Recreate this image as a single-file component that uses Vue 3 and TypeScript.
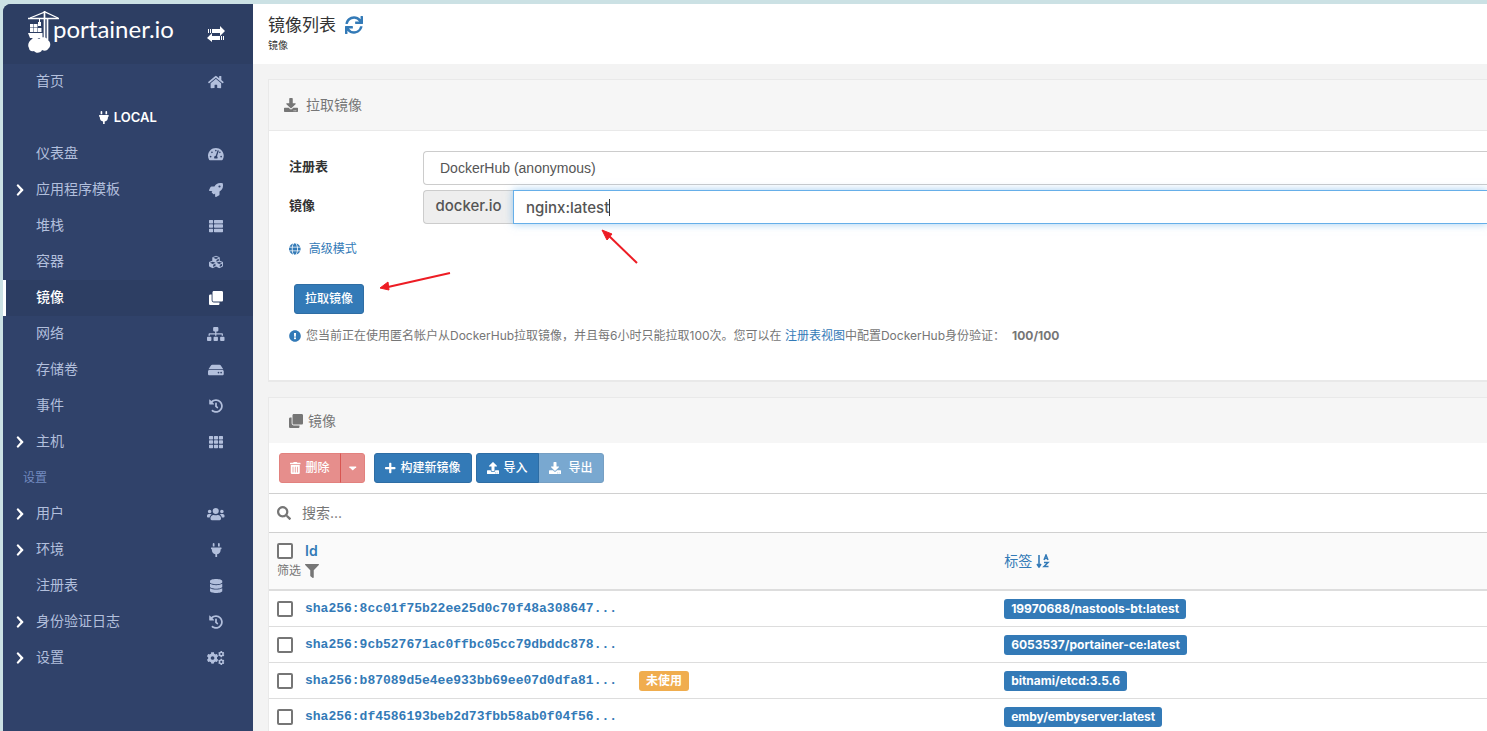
<script setup lang="ts">
import { h, ref } from 'vue'

type Glyph = { w: number; d: string }

const cog =
  'M487.4 315.7l-42.6-24.6c4.3-23.2 4.3-47 0-70.2l42.6-24.6c4.9-2.8 7.1-8.6 5.5-14-11.1-35.6-30-67.8-54.7-94.6-3.8-4.1-10-5.1-14.8-2.3L380.8 110c-17.9-15.4-38.5-27.3-60.8-35.1V25.8c0-5.6-3.9-10.5-9.4-11.7-36.7-8.2-74.3-7.8-109.2 0-5.5 1.2-9.4 6.1-9.4 11.7V75c-22.2 7.9-42.8 19.8-60.8 35.1L88.7 85.5c-4.9-2.8-11-1.9-14.8 2.3-24.7 26.7-43.6 58.9-54.7 94.6-1.7 5.4.6 11.2 5.5 14L67.3 221c-4.3 23.2-4.3 47 0 70.2l-42.6 24.6c-4.9 2.8-7.1 8.6-5.5 14 11.1 35.6 30 67.8 54.7 94.6 3.8 4.1 10 5.1 14.8 2.3l42.6-24.6c17.9 15.4 38.5 27.3 60.8 35.1v49.2c0 5.6 3.9 10.5 9.4 11.7 36.7 8.2 74.3 7.8 109.2 0 5.5-1.2 9.4-6.1 9.4-11.7v-49.2c22.2-7.9 42.8-19.8 60.8-35.1l42.6 24.6c4.9 2.8 11 1.9 14.8-2.3 24.7-26.7 43.6-58.9 54.7-94.6 1.5-5.5-.7-11.3-5.6-14.1zM256 336c-44.1 0-80-35.9-80-80s35.9-80 80-80 80 35.9 80 80-35.9 80-80 80z'

const glyphs: Record<string, Glyph> = {
  home: { w: 576, d: 'M280.37 148.26L96 300.11V464a16 16 0 0 0 16 16l112.06-.29a16 16 0 0 0 15.92-16V368a16 16 0 0 1 16-16h64a16 16 0 0 1 16 16v95.64a16 16 0 0 0 16 16.05L464 480a16 16 0 0 0 16-16V300L295.67 148.26a12.19 12.19 0 0 0-15.3 0zM571.6 251.47L488 182.56V44.05a12 12 0 0 0-12-12h-56a12 12 0 0 0-12 12v72.61L318.47 43a48 48 0 0 0-61 0L4.34 251.47a12 12 0 0 0-1.6 16.9l25.5 31A12 12 0 0 0 45.15 301l235.22-193.74a12.19 12.19 0 0 1 15.3 0L530.9 301a12 12 0 0 0 16.9-1.6l25.5-31a12 12 0 0 0-1.7-16.93z' },
  plug: { w: 384, d: 'M320 32a32 32 0 0 0-64 0v96h64zm48 128H16A16 16 0 0 0 0 176v32a16 16 0 0 0 16 16h16v32a160.07 160.07 0 0 0 128 156.8V512h64v-99.2A160.07 160.07 0 0 0 352 256v-32h16a16 16 0 0 0 16-16v-32a16 16 0 0 0-16-16zM128 32a32 32 0 0 0-64 0v96h64z' },
  gauge: { w: 576, d: 'M288 32C128.94 32 0 160.94 0 320c0 52.8 14.25 102.26 39.06 144.8 5.61 9.62 16.3 15.2 27.44 15.2h443c11.14 0 21.83-5.58 27.44-15.2C561.75 422.26 576 372.8 576 320c0-159.06-128.94-288-288-288zm0 64c14.71 0 26.58 10.13 30.32 23.65-1.11 2.26-2.64 4.23-3.45 6.67l-9.22 27.67c-5.13 3.49-10.97 6.01-17.64 6.01-17.67 0-32-14.33-32-32S270.33 96 288 96zM96 384c-17.67 0-32-14.33-32-32s14.33-32 32-32 32 14.33 32 32-14.33 32-32 32zm48-160c-17.67 0-32-14.33-32-32s14.33-32 32-32 32 14.33 32 32-14.33 32-32 32zm246.77-72.41l-61.33 184C343.13 347.33 352 364.54 352 384c0 11.72-3.38 22.55-8.88 32H232.88c-5.5-9.45-8.88-20.28-8.88-32 0-33.94 26.5-61.43 59.9-63.59l61.34-184.01c4.17-12.56 17.73-19.45 30.36-15.17 12.57 4.19 19.35 17.79 15.17 30.36zm14.66 57.2l15.52-46.55c3.47-1.29 7.13-2.23 11.05-2.23 17.67 0 32 14.33 32 32s-14.33 32-32 32c-11.38-.01-20.89-6.28-26.57-15.22zM480 384c-17.67 0-32-14.33-32-32s14.33-32 32-32 32 14.33 32 32-14.33 32-32 32z' },
  rocket: { w: 512, d: 'M505.12 19.09c-1.19-5.53-6.66-11-12.21-12.19C460.72 0 435.51 0 410.41 0 307.18 0 245.27 55.2 199.05 128H94.84c-16.35.02-35.56 11.88-42.89 26.48L2.52 253.3A28.4 28.4 0 0 0 0 264a24 24 0 0 0 24 24h103.82l-22.48 22.47c-11.36 11.36-12.99 32.26 0 45.25l50.9 50.9c11.16 11.19 32.16 13.16 45.28 0L224 384.16V488a24 24 0 0 0 24 24 28.56 28.56 0 0 0 10.71-2.52l98.73-49.39c14.63-7.29 26.51-26.5 26.51-42.86V312.8C456.56 266.48 512 204.39 512 101.7c.08-25.2.08-50.4-6.88-82.61zM384.04 168a40 40 0 1 1 40-40 40 40 0 0 1-40 40z' },
  list: { w: 512, d: 'M24 32h102a24 24 0 0 1 24 24v80a24 24 0 0 1-24 24H24a24 24 0 0 1-24-24V56a24 24 0 0 1 24-24zM206 32h282a24 24 0 0 1 24 24v80a24 24 0 0 1-24 24H206a24 24 0 0 1-24-24V56a24 24 0 0 1 24-24zM24 192h102a24 24 0 0 1 24 24v80a24 24 0 0 1-24 24H24a24 24 0 0 1-24-24v-80a24 24 0 0 1 24-24zM206 192h282a24 24 0 0 1 24 24v80a24 24 0 0 1-24 24H206a24 24 0 0 1-24-24v-80a24 24 0 0 1 24-24zM24 352h102a24 24 0 0 1 24 24v80a24 24 0 0 1-24 24H24a24 24 0 0 1-24-24v-80a24 24 0 0 1 24-24zM206 352h282a24 24 0 0 1 24 24v80a24 24 0 0 1-24 24H206a24 24 0 0 1-24-24v-80a24 24 0 0 1 24-24z' },
  grid: { w: 512, d: [32, 192, 352].map((y) => [0, 181, 362].map((x) => `M${x + 24} ${y}h102a24 24 0 0 1 24 24v80a24 24 0 0 1-24 24h-102a24 24 0 0 1-24-24v-80a24 24 0 0 1 24-24z`).join('')).join('') },
  cubes: { w: 512, d: 'M488.6 250.2L392 214V105.5c0-15-9.3-28.4-23.4-33.7l-100-37.5c-8.1-3.1-17.1-3.1-25.3 0l-100 37.5c-14.1 5.3-23.4 18.7-23.4 33.7V214l-96.6 36.2C9.3 255.5 0 268.9 0 283.9V394c0 13.6 7.7 26.1 19.9 32.2l100 50c10.1 5.1 22.1 5.1 32.2 0l103.9-52 103.9 52c10.1 5.1 22.1 5.1 32.2 0l100-50c12.2-6.1 19.9-18.6 19.9-32.2V283.9c0-15-9.3-28.4-23.4-33.7zM358 214.8l-85 31.9v-68.2l85-37v73.3zM154 104.1l102-38.2 102 38.2v.6l-102 41.4-102-41.4v-.6zm84 291.1l-85 42.5v-79.1l85-38.8v75.4zm0-112l-102 41.4-102-41.4v-.6l102-38.2 102 38.2v.6zm240 112l-85 42.5v-79.1l85-38.8v75.4zm0-112l-102 41.4-102-41.4v-.6l102-38.2 102 38.2v.6z' },
  clone: { w: 512, d: 'M464 0c26.51 0 48 21.49 48 48v288c0 26.51-21.49 48-48 48H176c-26.51 0-48-21.49-48-48V48c0-26.51 21.49-48 48-48h288M176 416c-44.112 0-80-35.888-80-80V128H48c-26.51 0-48 21.49-48 48v288c0 26.51 21.49 48 48 48h288c26.51 0 48-21.49 48-48v-48H176z' },
  sitemap: { w: 640, d: 'M128 352H32c-17.67 0-32 14.33-32 32v96c0 17.67 14.33 32 32 32h96c17.67 0 32-14.33 32-32v-96c0-17.67-14.33-32-32-32zm-24-80h192v48h48v-48h192v48h48v-57.59c0-21.17-17.23-38.41-38.41-38.41H344v-64h40c17.67 0 32-14.33 32-32V32c0-17.67-14.33-32-32-32H256c-17.67 0-32 14.33-32 32v96c0 17.67 14.33 32 32 32h40v64H94.41C73.23 224 56 241.23 56 262.41V320h48v-48zm264 80h-96c-17.67 0-32 14.33-32 32v96c0 17.67 14.33 32 32 32h96c17.67 0 32-14.33 32-32v-96c0-17.67-14.33-32-32-32zm240 0h-96c-17.67 0-32 14.33-32 32v96c0 17.67 14.33 32 32 32h96c17.67 0 32-14.33 32-32v-96c0-17.67-14.33-32-32-32z' },
  hdd: { w: 576, d: 'M576 304v96c0 26.51-21.49 48-48 48H48c-26.51 0-48-21.49-48-48v-96c0-26.51 21.49-48 48-48h480c26.51 0 48 21.49 48 48zm-48-80a79.557 79.557 0 0 1 30.777 6.165L462.25 85.374A48.003 48.003 0 0 0 422.311 64H153.689a48 48 0 0 0-39.938 21.374L17.223 230.165A79.557 79.557 0 0 1 48 224h480zm-48 96c-17.673 0-32 14.327-32 32s14.327 32 32 32 32-14.327 32-32-14.327-32-32-32zm-96 0c-17.673 0-32 14.327-32 32s14.327 32 32 32 32-14.327 32-32-14.327-32-32-32z' },
  history: { w: 512, d: 'M504 255.531c.253 136.64-111.18 248.372-247.82 248.468-59.015.042-113.223-20.53-155.822-54.911-11.077-8.94-11.905-25.541-1.839-35.607l11.267-11.267c8.609-8.609 22.353-9.551 31.891-1.984C173.062 425.135 212.781 440 256 440c101.705 0 184-82.311 184-184 0-101.705-82.311-184-184-184-48.814 0-93.149 18.969-126.068 49.932l50.754 50.754c10.08 10.08 2.941 27.314-11.313 27.314H24c-8.837 0-16-7.163-16-16V38.627c0-14.254 17.234-21.393 27.314-11.314l49.372 49.372C129.209 34.136 189.552 8 256 8c136.81 0 247.747 110.78 248 247.531zm-180.912 78.784l9.823-12.63c8.138-10.463 6.253-25.542-4.21-33.679L288 256.349V152c0-13.255-10.745-24-24-24h-16c-13.255 0-24 10.745-24 24v135.651l65.409 50.874c10.463 8.137 25.541 6.253 33.679-4.21z' },
  users: { w: 640, d: 'M96 224c35.3 0 64-28.7 64-64s-28.7-64-64-64-64 28.7-64 64 28.7 64 64 64zm448 0c35.3 0 64-28.7 64-64s-28.7-64-64-64-64 28.7-64 64 28.7 64 64 64zm32 32h-64c-17.6 0-33.5 7.1-45.1 18.6 40.3 22.1 68.9 62 75.1 109.4h66c17.7 0 32-14.3 32-32v-32c0-35.3-28.7-64-64-64zm-256 0c61.9 0 112-50.1 112-112S381.9 32 320 32 208 82.1 208 144s50.1 112 112 112zm76.8 32h-8.3c-20.8 10-43.9 16-68.5 16s-47.6-6-68.5-16h-8.3C179.6 288 128 339.6 128 403.2V432c0 26.5 21.5 48 48 48h288c26.5 0 48-21.5 48-48v-28.8c0-63.6-51.6-115.2-115.2-115.2zm-223.7-13.4C161.5 263.1 145.6 256 128 256H64c-35.3 0-64 28.7-64 64v32c0 17.7 14.3 32 32 32h65.9c6.3-47.4 34.9-87.3 75.2-109.4z' },
  database: { w: 448, d: 'M448 73.143v45.714C448 159.143 347.667 192 224 192S0 159.143 0 118.857V73.143C0 32.857 100.333 0 224 0s224 32.857 224 73.143zM448 176v102.857C448 319.143 347.667 352 224 352S0 319.143 0 278.857V176c48.125 33.143 136.208 48.572 224 48.572S399.874 209.143 448 176zm0 160v102.857C448 479.143 347.667 512 224 512S0 479.143 0 438.857V336c48.125 33.143 136.208 48.572 224 48.572S399.874 369.143 448 336z' },
  download: { w: 512, d: 'M216 0h80c13.3 0 24 10.7 24 24v168h87.7c17.8 0 26.7 21.5 14.1 34.1L269.7 378.3c-7.5 7.5-19.8 7.5-27.3 0L90.1 226.1c-12.6-12.6-3.7-34.1 14.1-34.1H192V24c0-13.3 10.7-24 24-24zm296 376v112c0 13.3-10.7 24-24 24H24c-13.3 0-24-10.7-24-24V376c0-13.3 10.7-24 24-24h146.7l49 49c20.1 20.1 52.5 20.1 72.6 0l49-49H488c13.3 0 24 10.7 24 24zm-124 88c0-11-9-20-20-20s-20 9-20 20 9 20 20 20 20-9 20-20zm64 0c0-11-9-20-20-20s-20 9-20 20 9 20 20 20 20-9 20-20z' },
  upload: { w: 512, d: 'M296 384h-80c-13.3 0-24-10.7-24-24V192h-87.7c-17.8 0-26.7-21.5-14.1-34.1L242.3 5.7c7.5-7.5 19.8-7.5 27.3 0l152.2 152.2c12.6 12.6 3.7 34.1-14.1 34.1H320v168c0 13.3-10.7 24-24 24zm216-8v112c0 13.3-10.7 24-24 24H24c-13.3 0-24-10.7-24-24V376c0-13.3 10.7-24 24-24h136v8c0 30.9 25.1 56 56 56h80c30.9 0 56-25.1 56-56v-8h136c13.3 0 24 10.7 24 24zm-124 88c0-11-9-20-20-20s-20 9-20 20 9 20 20 20 20-9 20-20zm64 0c0-11-9-20-20-20s-20 9-20 20 9 20 20 20 20-9 20-20z' },
  sync: { w: 512, d: 'M440.65 12.57l4 82.77A247.16 247.16 0 0 0 255.83 8C134.73 8 33.91 94.92 12.29 209.82A12 12 0 0 0 24.09 224h49.05a12 12 0 0 0 11.67-9.26 175.91 175.91 0 0 1 317-56.94l-101.46-4.86a12 12 0 0 0-12.57 12v47.41a12 12 0 0 0 12 12H500a12 12 0 0 0 12-12V12a12 12 0 0 0-12-12h-47.37a12 12 0 0 0-11.98 12.57zM255.83 432a175.61 175.61 0 0 1-146-77.8l101.8 4.87a12 12 0 0 0 12.57-12v-47.4a12 12 0 0 0-12-12H12a12 12 0 0 0-12 12V500a12 12 0 0 0 12 12h47.35a12 12 0 0 0 12-12.6l-4.15-82.57A247.17 247.17 0 0 0 255.83 504c121.11 0 221.93-86.92 243.55-201.82a12 12 0 0 0-11.8-14.18h-49.05a12 12 0 0 0-11.67 9.26A175.86 175.86 0 0 1 255.83 432z' },
  alert: { w: 512, d: 'M504 256c0 136.997-111.043 248-248 248S8 392.997 8 256C8 119.083 119.043 8 256 8s248 111.083 248 248zm-248 50c-25.405 0-46 20.595-46 46s20.595 46 46 46 46-20.595 46-46-20.595-46-46-46zm-43.673-165.346l7.418 136c.347 6.364 5.609 11.346 11.982 11.346h48.546c6.373 0 11.635-4.982 11.982-11.346l7.418-136c.375-6.874-5.098-12.654-11.982-12.654h-63.383c-6.884 0-12.356 5.78-11.981 12.654z' },
  globe: { w: 496, d: 'M336.5 160C322 70.7 287.8 8 248 8s-74 62.7-88.5 152h177zM152 256c0 22.2 1.2 43.5 3.3 64h185.3c2.1-20.5 3.3-41.8 3.3-64s-1.2-43.5-3.3-64H155.3c-2.1 20.5-3.3 41.8-3.3 64zm324.7-96c-28.6-67.9-86.5-120.4-158-141.6 24.4 33.8 41.2 84.7 50 141.6h108zM177.2 18.4C105.8 39.6 47.8 92.1 19.3 160h108c8.7-56.9 25.5-107.8 49.9-141.6zM487.4 192H372.7c2.1 21 3.3 42.5 3.3 64s-1.2 43-3.3 64h114.6c5.5-20.5 8.6-41.8 8.6-64s-3.1-43.5-8.5-64zM120 256c0-21.5 1.2-43 3.3-64H8.6C3.2 212.5 0 233.8 0 256s3.2 43.5 8.6 64h114.6c-2-21-3.2-42.5-3.2-64zm39.5 96c14.5 89.3 48.7 152 88.5 152s74-62.7 88.5-152h-177zm159.3 141.6c71.4-21.2 129.4-73.7 158-141.6h-108c-8.8 56.9-25.6 107.8-50 141.6zM19.3 352c28.6 67.9 86.5 120.4 158 141.6-24.4-33.8-41.2-84.7-50-141.6h-108z' },
  trash: { w: 448, d: 'M32 464a48 48 0 0 0 48 48h288a48 48 0 0 0 48-48V128H32zm272-256a16 16 0 0 1 32 0v224a16 16 0 0 1-32 0zm-96 0a16 16 0 0 1 32 0v224a16 16 0 0 1-32 0zm-96 0a16 16 0 0 1 32 0v224a16 16 0 0 1-32 0zM432 32H312l-9.4-18.7A24 24 0 0 0 281.1 0H166.8a23.72 23.72 0 0 0-21.4 13.3L136 32H16A16 16 0 0 0 0 48v32a16 16 0 0 0 16 16h416a16 16 0 0 0 16-16V48a16 16 0 0 0-16-16z' },
  plus: { w: 448, d: 'M416 208H272V64c0-17.67-14.33-32-32-32h-32c-17.67 0-32 14.33-32 32v144H32c-17.67 0-32 14.33-32 32v32c0 17.67 14.33 32 32 32h144v144c0 17.67 14.33 32 32 32h32c17.67 0 32-14.33 32-32V304h144c17.67 0 32-14.33 32-32v-32c0-17.67-14.33-32-32-32z' },
  search: { w: 512, d: 'M505 442.7L405.3 343c-4.5-4.5-10.6-7-17-7H372c27.6-35.3 44-79.7 44-128C416 93.1 322.9 0 208 0S0 93.1 0 208s93.1 208 208 208c48.3 0 92.7-16.4 128-44v16.3c0 6.4 2.5 12.5 7 17l99.7 99.7c9.4 9.4 24.6 9.4 33.9 0l28.3-28.3c9.4-9.4 9.4-24.6.1-34zM208 336c-70.7 0-128-57.2-128-128 0-70.7 57.2-128 128-128 70.7 0 128 57.2 128 128 0 70.7-57.2 128-128 128z' },
  filter: { w: 512, d: 'M487.976 0H24.028C2.71 0-8.047 25.866 7.058 40.971L192 225.941V432c0 7.831 3.821 15.17 10.237 19.662l80 55.98C298.02 518.69 320 507.493 320 487.98V225.941l184.947-184.97C520.021 25.896 509.338 0 487.976 0z' },
  caret: { w: 320, d: 'M24 192h272c14 0 21 17 11 27L171 355c-6 6-16 6-22 0L13 219c-10-10-3-27 11-27z' },
  chevron: { w: 320, d: 'M24 62L82 4l228 230c12 12 12 32 0 44L82 508l-58-58 168-194z' },
}

const Icon = (props: { name: string }) => {
  if (props.name === 'cogs') {
    return h('svg', { class: 'icon', viewBox: '0 0 640 512', 'aria-hidden': 'true' }, [
      h('path', { d: cog, transform: 'translate(-14 38) scale(.85)' }),
      h('path', { d: cog, transform: 'translate(405 -4) scale(.46)' }),
      h('path', { d: cog, transform: 'translate(405 280) scale(.46)' }),
    ])
  }
  const g = glyphs[props.name]
  return h('svg', { class: 'icon', viewBox: `0 0 ${g.w} 512`, 'aria-hidden': 'true' }, [h('path', { d: g.d })])
}
Icon.props = ['name']

type Item = { label: string; icon?: string; expandable?: boolean; active?: boolean; kind?: 'env' | 'title' }

const menu: Item[] = [
  { label: '首页', icon: 'home' },
  { label: 'LOCAL', icon: 'plug', kind: 'env' },
  { label: '仪表盘', icon: 'gauge' },
  { label: '应用程序模板', icon: 'rocket', expandable: true },
  { label: '堆栈', icon: 'list' },
  { label: '容器', icon: 'cubes' },
  { label: '镜像', icon: 'clone', active: true },
  { label: '网络', icon: 'sitemap' },
  { label: '存储卷', icon: 'hdd' },
  { label: '事件', icon: 'history' },
  { label: '主机', icon: 'grid', expandable: true },
  { label: '设置', kind: 'title' },
  { label: '用户', icon: 'users', expandable: true },
  { label: '环境', icon: 'plug', expandable: true },
  { label: '注册表', icon: 'database' },
  { label: '身份验证日志', icon: 'history', expandable: true },
  { label: '设置', icon: 'cogs', expandable: true },
]

const images = [
  { id: 'sha256:8cc01f75b22ee25d0c70f48a308647...', tag: '19970688/nastools-bt:latest', unused: false },
  { id: 'sha256:9cb527671ac0ffbc05cc79dbddc878...', tag: '6053537/portainer-ce:latest', unused: false },
  { id: 'sha256:b87089d5e4ee933bb69ee07d0dfa81...', tag: 'bitnami/etcd:3.5.6', unused: true },
  { id: 'sha256:df4586193beb2d73fbb58ab0f04f56...', tag: 'emby/embyserver:latest', unused: false },
]

const image = ref('nginx:latest')
const search = ref('')
</script>

<template>
  <div class="page">
    <aside class="sidebar">
      <header class="brand">
        <a class="logo" href="#">
          <svg class="crane" viewBox="0 0 32 44" aria-hidden="true">
            <g fill="none" stroke="currentColor">
              <path d="M0 8.500h31" stroke-width="1.500" />
              <path d="M2 8L17 2l13 6" stroke-width="1.200" />
              <path d="M16.500 1v30M19.500 9v21" stroke-width="1.700" />
              <path d="M11.500 9v5" stroke-width="1" />
            </g>
            <path d="M10 12h3v4h-3zM2 14h3.500v3.500H2zM6 14h3.500v3.500H6zM2 18h3.500v4H2zM6 18h3.500v4H6zM10 18h3.500v4H10zM0 23h14.500v5H2z" />
            <path d="M4 29c1-2 5-2 7 0 3-3 8-2 9 1 3 2 3 7 0 9-1 2-4 2-6 1-1 3-6 4-8 1-3 1-5-1-5-3-2-3 0-7 3-9z" />
          </svg>
          <span class="wordmark">portainer.io</span>
        </a>
        <button class="toggle" type="button" aria-label="切换菜单">
          <svg viewBox="0 0 18 16" aria-hidden="true">
            <path d="M1 3h1v4H1zM3 3h1v4H3zM5 3h8V0l5 5-5 5V7H5zM17 10h-1v4h1zM15 10h-1v4h1zM13 10H5V7L0 12l5 4v-2h8z" />
          </svg>
        </button>
      </header>
      <nav>
        <ul class="menu">
          <li v-for="(item, i) in menu" :key="i">
            <span v-if="item.kind === 'title'" class="section">{{ item.label }}</span>
            <span v-else-if="item.kind === 'env'" class="env"><Icon name="plug" />{{ item.label }}</span>
            <a v-else href="#" class="entry" :class="{ active: item.active }">
              <span class="arrow"><Icon v-if="item.expandable" name="chevron" /></span>
              <span class="label">{{ item.label }}</span>
              <span class="glyph"><Icon :name="item.icon" /></span>
            </a>
          </li>
        </ul>
      </nav>
    </aside>

    <main class="content">
      <header class="title-bar">
        <h1>镜像列表 <a href="#" class="refresh" aria-label="刷新"><Icon name="sync" /></a></h1>
        <p>镜像</p>
      </header>

      <section class="panel pull">
        <h2><Icon name="download" />拉取镜像</h2>
        <form class="pull-form" @submit.prevent>
          <div class="field">
            <label for="registry">注册表</label>
            <select id="registry"><option>DockerHub (anonymous)</option></select>
          </div>
          <div class="field">
            <label for="image">镜像</label>
            <div class="group">
              <span class="addon">docker.io</span>
              <div class="focused"><input id="image" v-model="image" type="text" /><i class="cursor"></i></div>
            </div>
          </div>
          <a class="advanced" href="#"><Icon name="globe" />高级模式</a>
          <button class="btn primary submit" type="submit">拉取镜像</button>
          <p class="hint">
            <Icon name="alert" />
            <span>您当前正在使用匿名帐户从DockerHub拉取镜像，并且每6小时只能拉取100次。您可以在 <a href="#">注册表视图</a>中配置DockerHub身份验证：</span>
            <strong>100/100</strong>
          </p>
          <svg class="marks" viewBox="0 0 180 70" aria-hidden="true">
            <path d="M257 38L227 9" />
            <path class="tip" d="M222 5l10 4-5 6z" />
            <path d="M70 48L8 62" />
            <path class="tip" d="M0 63l8-6 1 8z" />
          </svg>
        </form>
      </section>

      <section class="panel images">
        <h2><Icon name="clone" />镜像</h2>
        <div class="toolbar">
          <div class="btn-group">
            <button class="btn danger" type="button" disabled><Icon name="trash" />删除</button>
            <button class="btn danger drop" type="button" disabled aria-label="更多"><Icon name="caret" /></button>
          </div>
          <button class="btn primary build" type="button"><Icon name="plus" />构建新镜像</button>
          <div class="btn-group">
            <button class="btn primary" type="button"><Icon name="upload" />导入</button>
            <button class="btn primary export" type="button" disabled><Icon name="download" />导出</button>
          </div>
        </div>
        <div class="search">
          <label for="search" aria-label="搜索"><Icon name="search" /></label>
          <input id="search" v-model="search" type="text" placeholder="搜索..." />
        </div>
        <table>
          <colgroup><col class="id-col" /><col /></colgroup>
          <thead>
            <tr>
              <th>
                <div class="line"><input type="checkbox" aria-label="全选" /><a href="#" class="id-head">Id</a></div>
                <button class="filter" type="button">筛选 <Icon name="filter" /></button>
              </th>
              <th>
                <a href="#" class="sort">标签
                  <svg viewBox="0 0 14 14" fill="none" stroke="currentColor" aria-hidden="true">
                    <path d="M3 1v11M1 10l2 3 2-3" stroke-width="1.600" />
                    <path d="M8 6l2-5 2 5M9 4.500h2.500M8 8.500h4l-4 4h4.500" stroke-width="1.500" />
                  </svg>
                </a>
              </th>
            </tr>
          </thead>
          <tbody>
            <tr v-for="row in images" :key="row.id">
              <td>
                <div class="line">
                  <input type="checkbox" :aria-label="row.id" />
                  <a href="#" class="mono">{{ row.id }}</a>
                  <span v-if="row.unused" class="badge warn">未使用</span>
                </div>
              </td>
              <td><span class="badge">{{ row.tag }}</span></td>
            </tr>
          </tbody>
        </table>
      </section>
    </main>
  </div>
</template>

<style>
html,
body {
  background: #cbe1e4;
}
body {
  margin: 0;
  overflow: hidden;
}
</style>

<style scoped>
.page {
  display: flex;
  box-sizing: border-box;
  height: 100vh;
  padding: 4px 0 0 3px;
  overflow: hidden;
  font: 14px/20px Inter, "Noto Sans CJK SC", sans-serif;
  color: #333;
}
.page :deep(.icon) {
  height: 1em;
  fill: currentColor;
  flex: none;
  overflow: visible;
}
a {
  color: #337ab7;
  text-decoration: none;
}
button,
input,
select {
  font: inherit;
  color: inherit;
}
h1,
h2,
p,
ul {
  margin: 0;
  padding: 0;
}

.sidebar {
  flex: 0 0 250px;
  background: #30426a;
  border-top-left-radius: 8px;
  overflow: hidden;
}
.brand {
  display: flex;
  justify-content: space-between;
  height: 60px;
  box-sizing: border-box;
  padding: 6px 28px 0 25px;
  background: #2d3e63;
}
.logo {
  display: flex;
  color: #fff;
}
.crane {
  width: 32px;
  height: 44px;
  fill: #fff;
}
.wordmark {
  margin-left: -7px;
  font: 24px/38px Lato, sans-serif;
}
.toggle {
  align-self: center;
  border: 0;
  padding: 0;
  background: none;
}
.toggle svg {
  display: block;
  width: 18px;
  height: 16px;
  margin-bottom: 6px;
  fill: #fff;
}
.menu {
  list-style: none;
  line-height: 34px;
}
.menu li {
  height: 36px;
}
.entry {
  display: flex;
  height: 36px;
  box-sizing: border-box;
  padding: 0 27px 0 13px;
  color: #b2bfdc;
}
.arrow {
  flex: 0 0 20px;
  display: flex;
  align-items: center;
  font-size: 12px;
  color: #fff;
}
.entry.active {
  padding-left: 10px;
  border-left: 3px solid #fff;
  background: #2d3e63;
  color: #fff;
  font-weight: 500;
}
.label {
  flex: 1;
}
.glyph {
  display: flex;
  width: 20px;
  justify-content: center;
  align-items: center;
}
.env {
  display: flex;
  justify-content: center;
  align-items: center;
  gap: 5px;
  height: 34px;
  font-size: 13px;
  font-weight: 600;
  color: #fff;
}
.section {
  display: block;
  padding-left: 20px;
  font-size: 12px;
  line-height: 36px;
  color: #738bc0;
}

.content {
  flex: 1;
  min-width: 0;
  background: #f3f3f3;
}
.title-bar {
  height: 60px;
  box-sizing: border-box;
  padding: 9px 15px 0;
  background: #fff;
}
.title-bar h1 {
  display: flex;
  align-items: center;
  gap: 9px;
  font-size: 17px;
  line-height: 24px;
  font-weight: 400;
}
.refresh {
  display: flex;
  font-size: 18px;
}
.title-bar p {
  font-size: 10px;
  line-height: 16px;
}
.panel {
  margin: 15px 0 0 15px;
  border: solid #e9e9e9;
  border-width: 1px 0 2px 1px;
  background: #fff;
}
.panel h2 {
  display: flex;
  align-items: center;
  gap: 8px;
  height: 50px;
  padding-left: 15px;
  background: #f6f6f6;
  color: #767676;
  font-size: 14px;
  font-weight: 400;
}
.pull h2 {
  border-bottom: 1px solid #e9e9e9;
}
.pull-form {
  position: relative;
  padding: 20px 0 34px 20px;
}
.field {
  display: flex;
  margin-bottom: 5px;
}
.field label {
  flex: 0 0 134px;
  font-size: 13px;
  line-height: 30px;
  font-weight: 700;
}
.field select,
.field input {
  box-sizing: border-box;
  height: 34px;
  border: 1px solid #ccc;
  outline: 0;
  background: #fff;
  color: #555;
}
.field select {
  flex: 1;
  appearance: none;
  padding: 0 16px;
  border-right: 0;
  border-radius: 4px 0 0 4px;
  font-family: "Liberation Sans", Arial, sans-serif;
}
.group {
  flex: 1;
  display: flex;
}
.addon {
  box-sizing: border-box;
  width: 90px;
  height: 34px;
  border: 1px solid #ccc;
  border-right: 0;
  border-radius: 4px 0 0 4px;
  background: #eee;
  color: #555;
  font-size: 15px;
  font-weight: 500;
  line-height: 30px;
  text-align: center;
}
.focused {
  position: relative;
  flex: 1;
}
.field input {
  width: 100%;
  padding: 0 12px;
  border-color: #66afe9;
  border-right: 0;
  box-shadow: 0 0 8px rgba(102, 175, 233, 0.6);
  font-size: 15px;
  font-weight: 500;
}
.cursor {
  position: absolute;
  left: 96px;
  top: 9px;
  width: 1px;
  height: 17px;
  background: #333;
}
.advanced {
  display: flex;
  align-items: center;
  gap: 8px;
  width: max-content;
  margin-top: 15px;
  font-size: 12px;
}
.btn {
  display: flex;
  align-items: center;
  gap: 5px;
  height: 30px;
  padding: 0 10px;
  border: 1px solid;
  border-radius: 3px;
  color: #fff;
  font-size: 12px;
  font-weight: 500;
}
.primary {
  background: #337ab7;
  border-color: #2e6da4;
}
.danger {
  background: #d9534f;
  border-color: #d43f3a;
}
.btn:disabled {
  opacity: 0.65;
}
.submit {
  margin: 25px 0 0 5px;
}
.hint {
  display: flex;
  align-items: center;
  gap: 5px;
  margin-top: 12px;
  font-size: 12px;
  color: #767676;
}
.hint > :deep(.icon) {
  color: #337ab7;
}
.hint strong {
  margin-left: 2px;
  font-weight: 700;
}
.marks {
  position: absolute;
  left: 111px;
  top: 94px;
  width: 180px;
  height: 70px;
  overflow: visible;
  fill: none;
  stroke: #ed1c24;
  stroke-width: 2;
  pointer-events: none;
}
.marks .tip {
  fill: #ed1c24;
  stroke-width: 1;
}

.images h2 {
  height: 45px;
  gap: 5px;
  padding: 0 0 0 20px;
}
.toolbar {
  display: flex;
  padding: 10px;
}
.btn-group {
  display: flex;
}
.btn-group .btn:first-child {
  border-radius: 3px 0 0 3px;
}
.btn-group .btn:last-child {
  border-radius: 0 3px 3px 0;
  margin-left: -1px;
}
.btn-group .export {
  gap: 8px;
}
.btn-group .drop {
  padding: 0 8px;
}
.build {
  margin: 0 4px 0 9px;
}
.search {
  display: flex;
  align-items: center;
  gap: 11px;
  height: 38px;
  padding-left: 8px;
  border: solid #d0d0d0;
  border-width: 1px 0;
  color: #767676;
}
.search label {
  display: flex;
}
.search input {
  flex: 1;
  border: 0;
  outline: 0;
  padding: 0;
  background: none;
}
.search input::placeholder {
  color: #767676;
}
table {
  width: 100%;
  border-collapse: collapse;
  table-layout: fixed;
}
.id-col {
  width: 59.7%;
}
th {
  height: 56px;
  padding: 0 8px;
  background: #fafafa;
  border-bottom: 2px solid #ddd;
  font-weight: 400;
  text-align: left;
}
td {
  height: 35px;
  padding: 0 8px;
  border-bottom: 1px solid #ddd;
}
.line {
  display: flex;
  align-items: center;
}
input[type='checkbox'] {
  appearance: none;
  box-sizing: border-box;
  width: 16px;
  height: 16px;
  margin: 0 12px 0 0;
  border: 2px solid #767676;
  border-radius: 2px;
  background: #fff;
}
.id-head {
  font-weight: 600;
}
.filter {
  display: flex;
  align-items: center;
  gap: 4px;
  padding: 0;
  border: 0;
  background: none;
  color: #767676;
  font-size: 12px;
  line-height: 20px;
}
.filter :deep(.icon) {
  font-size: 14px;
}
.sort {
  display: flex;
  align-items: center;
  gap: 4px;
}
.sort svg {
  width: 14px;
  height: 14px;
}
.mono {
  font: 700 13px/20px "Liberation Mono", monospace;
}
.badge {
  display: inline-block;
  padding: 0 7px;
  border-radius: 3px;
  background: #337ab7;
  color: #fff;
  font-size: 12px;
  font-weight: 700;
  line-height: 20px;
  vertical-align: middle;
}
.warn {
  margin-left: 22px;
  background: #f0ad4e;
}
</style>
